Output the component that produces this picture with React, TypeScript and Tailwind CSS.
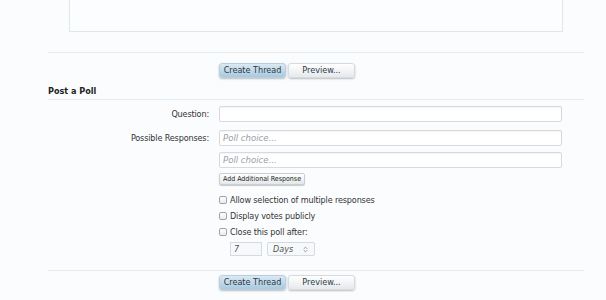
import { ChevronsUpDown } from 'lucide-react'

const font = { fontFamily: '"DejaVu Sans Condensed", "DejaVu Sans", sans-serif' }

function ActionButtons() {
  return (
    <div className="flex gap-[2px] pl-[171px]">
      <button className="h-[15px] w-[67px] rounded-[3px] border border-[#b9cfdf] bg-gradient-to-b from-[#dbe9f3] to-[#a9c9df] text-[9px] leading-none text-[#2b3a45] shadow-[0_1px_2px_rgba(0,0,0,0.25)]">
        Create Thread
      </button>
      <button className="h-[15px] w-[67px] rounded-[3px] border border-[#d6dbe0] bg-gradient-to-b from-[#ffffff] to-[#e6e9ed] text-[9px] leading-none text-[#2b3a45] shadow-[0_1px_2px_rgba(0,0,0,0.25)]">
        Preview...
      </button>
    </div>
  )
}

function Row({ label, children }: { label?: string; children: React.ReactNode }) {
  return (
    <div className="flex">
      <div className="w-[161px] shrink-0 text-right text-[9px] leading-[16px] tracking-[-0.15px] text-[#333]">
        {label}
      </div>
      <div className="ml-[10px] flex-1">{children}</div>
    </div>
  )
}

function TextBox({ placeholder }: { placeholder?: string }) {
  return (
    <div className="flex h-[16px] w-[343px] items-center rounded-[2px] border border-[#d4dadf] bg-white px-[3px] text-[9.5px] leading-none italic text-[#9aa0a6] shadow-[inset_0_1px_1px_rgba(0,0,0,0.04)]">
      {placeholder}
    </div>
  )
}

function Check({ label }: { label: string }) {
  return (
    <div className="flex h-[16px] items-center gap-[3px]">
      <span className="h-[8px] w-[8px] rounded-[2px] border border-[#9ea4aa] bg-gradient-to-b from-white to-[#e9ecef]" />
      <span className="text-[9px] leading-none tracking-[-0.15px] text-[#333]">{label}</span>
    </div>
  )
}

export default function App() {
  return (
    <div className="h-[300px] w-[606px] overflow-hidden bg-[#fbfcfe]" style={font}>
      <div className="ml-[48px] w-[536px]">
        <div className="pl-[21px]">
          <div className="-mt-[10px] h-[42px] w-[494px] border border-[#dfe6ec] bg-[#fcfdfe]" />
        </div>
        <div className="mt-[20px] border-t border-[#e3ebf0]" />
        <div className="mt-[10px]">
          <ActionButtons />
        </div>

        <div className="mt-[7px] border-b border-[#e3ebf0] pb-[2px] text-[9px] font-bold leading-[12px] text-[#222]">
          Post a Poll
        </div>

        <div className="mt-[6px] flex flex-col">
          <Row label="Question:">
            <TextBox />
          </Row>
          <div className="mt-[8px]">
            <Row label="Possible Responses:">
              <div className="flex flex-col">
                <TextBox placeholder="Poll choice..." />
                <div className="mt-[6px]">
                  <TextBox placeholder="Poll choice..." />
                </div>
                <div className="mt-[5px] flex">
                  <button className="h-[12px] rounded-[2px] border border-[#c9ced3] bg-gradient-to-b from-white to-[#e4e7ea] px-[3px] text-[7px] leading-none text-[#222] shadow-[0_1px_1px_rgba(0,0,0,0.2)]">
                    Add Additional Response
                  </button>
                </div>
              </div>
            </Row>
          </div>
          <div className="mt-[7px]">
            <Row>
              <div className="flex flex-col">
                <Check label="Allow selection of multiple responses" />
                <Check label="Display votes publicly" />
                <Check label="Close this poll after:" />
                <div className="ml-[11px] mt-[2px] flex gap-[5px]">
                  <div className="flex h-[14px] w-[32px] items-center border border-[#d4dadf] bg-[#f7f8fa] px-[3px] text-[9px] leading-none italic text-[#555]">
                    7
                  </div>
                  <div className="flex h-[14px] w-[48px] items-center justify-between rounded-[2px] border border-[#d4dadf] bg-[#f7f8fa] px-[5px] text-[9px] leading-none italic text-[#555]">
                    Days
                    <ChevronsUpDown size={7} strokeWidth={2.5} className="text-[#777]" />
                  </div>
                </div>
              </div>
            </Row>
          </div>
        </div>

        <div className="mt-[14px] border-t border-[#e3ebf0]" />
        <div className="mt-[4px]">
          <ActionButtons />
        </div>
      </div>
    </div>
  )
}
